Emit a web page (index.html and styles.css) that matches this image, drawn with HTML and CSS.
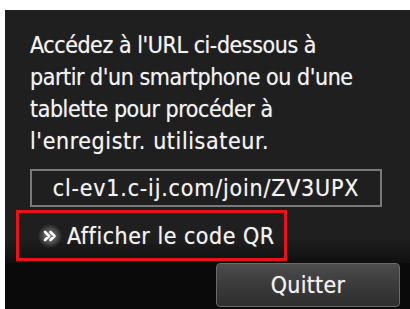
FILE: index.html
```html
<!DOCTYPE html>
<html lang="fr">
<head>
<meta charset="utf-8">
<link rel="stylesheet" href="styles.css">
</head>
<body>
<div class="screen">
  <div class="main">
    <p class="msg">Accédez à l'URL ci-dessous à<br>partir d'un smartphone ou d'une<br>tablette pour procéder à<br><span class="last">l'enregistr. utilisateur.</span></p>
    <div class="url">cl-ev1.c-ij.com/join/ZV3UPX</div>
    <div class="link">
      <span class="chev">
        <svg width="14" height="12" viewBox="0 0 14 12"><path d="M2 2 L6 6 L2 10 M7.5 2 L11.5 6 L7.5 10" fill="none" stroke="#fff" stroke-width="2.6" stroke-linecap="round" stroke-linejoin="round"/></svg>
      </span>
      <span class="link-text">Afficher le code QR</span>
    </div>
  </div>
  <div class="bottom">
    <button class="quit">Quitter</button>
  </div>
</div>
</body>
</html>
```
FILE: styles.css
```css
html, body {
  margin: 0;
  padding: 0;
  background: #ffffff;
}
body {
  width: 410px;
  height: 309px;
  overflow: hidden;
}
.screen {
  margin: 10px 0 0 5px;
  height: 299px;
  background: #1f1f1f;
  display: flex;
  flex-direction: column;
  font-family: "DejaVu Sans Condensed", "DejaVu Sans", sans-serif;
  color: #f2f2f2;
  text-shadow: 0 0 1px rgba(255, 255, 255, 0.5);
}
.main {
  flex: 1;
  padding: 0 0 0 11px;
  background: linear-gradient(to bottom, #1f1f1f 0, #1f1f1f 228px, #0e0e0e 255px);
}
.msg {
  margin: 19px 0 0 14px;
  font-size: 23px;
  line-height: 32px;
  letter-spacing: -0.45px;
  white-space: nowrap;
}
.last {
  letter-spacing: 0.6px;
}
.url {
  margin: 12px 0 0 14px;
  width: 348px;
  height: 34px;
  border: 2px solid #7a7a7a;
  font-size: 23px;
  line-height: 34px;
  text-align: center;
  letter-spacing: 0.8px;
}
.link {
  margin-top: 3px;
  width: 246px;
  height: 45px;
  border: 3px solid #e8121a;
  display: flex;
  align-items: center;
  gap: 5px;
  padding-left: 19px;
  font-size: 23px;
  letter-spacing: 0.5px;
}
.chev {
  width: 24px;
  height: 24px;
  border-radius: 50%;
  background: radial-gradient(circle, rgba(255,255,255,0.45) 0, rgba(255,255,255,0.15) 50%, rgba(255,255,255,0) 72%);
  display: flex;
  align-items: center;
  justify-content: center;
}
.bottom {
  height: 46px;
  background: #0a0a0a;
  display: flex;
  justify-content: flex-end;
  align-items: flex-end;
  padding-right: 10px;
}
.quit {
  width: 184px;
  height: 44px;
  margin-bottom: 2px;
  border: 1px solid #6a6a6a;
  border-radius: 4px;
  background: linear-gradient(to bottom, #4d4d4d 0, #3a3a3a 50%, #2e2e2e 100%);
  color: #f2f2f2;
  font-family: "DejaVu Sans Condensed", "DejaVu Sans", sans-serif;
  font-size: 23px;
  letter-spacing: 0.3px;
  text-shadow: 0 0 1px rgba(255, 255, 255, 0.5);
  padding: 0;
}
```
